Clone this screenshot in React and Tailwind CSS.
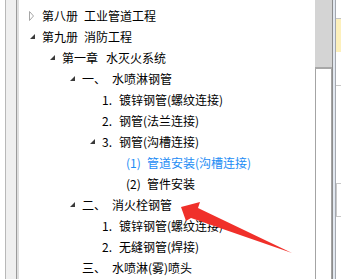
import React from 'react'

// tree rows: level sets the indent, toggle = 'open' | 'closed' | null
const rows = [
  { level: 0, toggle: 'closed', label: '第八册', text: '工业管道工程', labelW: 'w-[42px]' },
  { level: 0, toggle: 'open', label: '第九册', text: '消防工程', labelW: 'w-[42px]' },
  { level: 1, toggle: 'open', label: '第一章', text: '水灭火系统', labelW: 'w-[44px]' },
  { level: 2, toggle: 'open', label: '一、', text: '水喷淋钢管', labelW: 'w-[30px]' },
  { level: 3, toggle: null, label: '1.', text: '镀锌钢管(螺纹连接)', labelW: 'w-[17px]' },
  { level: 3, toggle: null, label: '2.', text: '钢管(法兰连接)', labelW: 'w-[17px]' },
  { level: 3, toggle: 'open', label: '3.', text: '钢管(沟槽连接)', labelW: 'w-[17px]' },
  { level: 4, toggle: null, label: '(1)', text: '管道安装(沟槽连接)', labelW: 'w-[21px]', active: true },
  { level: 4, toggle: null, label: '(2)', text: '管件安装', labelW: 'w-[21px]' },
  { level: 2, toggle: 'open', label: '二、', text: '消火栓钢管', labelW: 'w-[30px]' },
  { level: 3, toggle: null, label: '1.', text: '镀锌钢管(螺纹连接)', labelW: 'w-[17px]' },
  { level: 3, toggle: null, label: '2.', text: '无缝钢管(焊接)', labelW: 'w-[17px]' },
  { level: 2, toggle: null, label: '三、', text: '水喷淋(雾)喷头', labelW: 'w-[30px]' },
]

const indent = ['pl-[10px]', 'pl-[30px]', 'pl-[50px]', 'pl-[70px]', 'pl-[107px]']

function Toggle({ kind }) {
  if (kind === 'closed') {
    return (
      <svg width="9" height="10" viewBox="0 0 9 10" className="block">
        <polygon points="0.5,0.5 4.5,5 0.5,9.5" fill="#fff" stroke="#a6a6a6" strokeWidth="1" />
      </svg>
    )
  }
  if (kind === 'open') {
    return (
      <svg width="6" height="6" viewBox="0 0 6 6" className="block ml-[1px] mt-[1px]">
        <polygon points="5,0 5,5 0,5" fill="#3a3a3a" />
      </svg>
    )
  }
  return null
}

function Row({ row }) {
  return (
    <div className={`flex items-center h-[21px] ${indent[row.level]} ${row.active ? 'text-[#1c8cf5]' : 'text-black'}`}>
      {row.level < 4 && (
        <span className="w-[13px] flex items-center">
          <Toggle kind={row.toggle} />
        </span>
      )}
      <span className={`${row.labelW} shrink-0`}>{row.label}</span>
      <span className="whitespace-nowrap">{row.text}</span>
    </div>
  )
}

export default function App() {
  return (
    <div className="relative w-[341px] h-[279px] overflow-hidden bg-white flex text-[12px] leading-[21px] font-[family-name:'Noto_Sans_CJK_SC','Noto_Sans',sans-serif]">
      {/* left frame edge */}
      <div className="w-[5px] bg-white" />
      <div className="w-[1px] bg-[#b8b8b8]" />
      <div className="w-[10px] bg-[#efefef]" />
      <div className="w-[1px] bg-[#9a9a9a]" />
      <div className="w-[2px] bg-[#dedede]" />

      {/* tree */}
      <div className="flex-1 pt-[5px]">
        {rows.map((r, i) => (
          <Row key={i} row={r} />
        ))}
      </div>

      {/* scrollbar */}
      <div className="w-[17px] flex flex-col">
        <div className="h-[67px] bg-[#d4d4d4]" />
        <div className="h-[2px] bg-[#a8a8a8]" />
        <div className="flex-1 bg-white border-l border-r border-[#a4a4a4]" />
      </div>

      {/* splitter */}
      <div className="w-[1px] bg-[#8c8c8c]" />
      <div className="w-[2px] bg-[#e2e8f0]" />
      <div className="w-[1px] bg-[#a4a8b0]" />

      {/* next panel edge */}
      <div className="w-[5px] flex flex-col bg-white">
        <div className="h-[18px]" />
        <div className="h-[1px] bg-[#c4c4c4]" />
        <div className="h-[33px] bg-[#fdf0bc]" />
        <div className="h-[33px]" />
        <div className="h-[1px] bg-[#c8c8c8]" />
        <div className="h-[97px]" />
        <div className="h-[1px] bg-[#c8c8c8]" />
        <div className="h-[32px] border-l border-[#c8c8c8]" />
        <div className="h-[1px] bg-[#c8c8c8]" />
      </div>

      {/* annotation arrow */}
      <svg className="absolute left-0 top-0 pointer-events-none" width="341" height="279" viewBox="0 0 341 279">
        <polygon
          points="181,207 200,202 198,208 292,253 191,218 186,221"
          fill="#f0302a"
        />
      </svg>
    </div>
  )
}
